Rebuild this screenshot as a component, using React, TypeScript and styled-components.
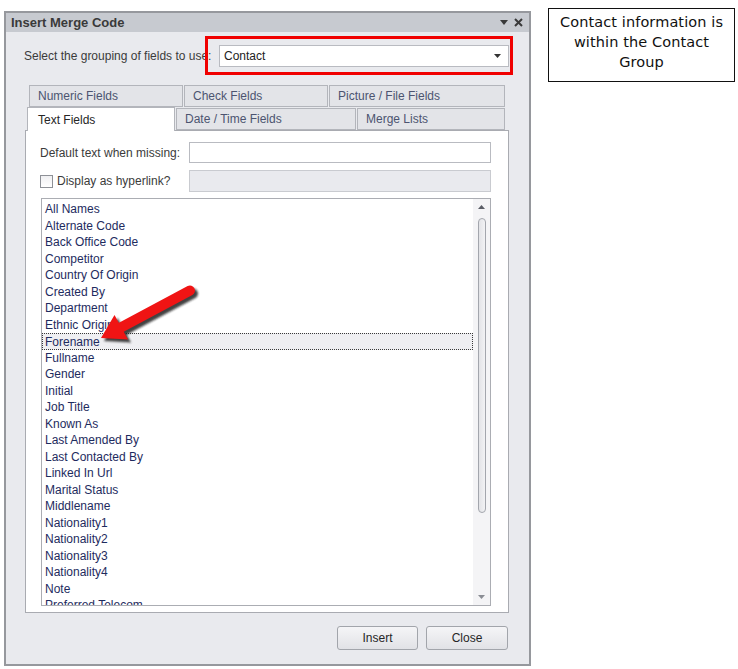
import React from "react";
import styled, { createGlobalStyle } from "styled-components";

const Global = createGlobalStyle`
  html, body { margin: 0; padding: 0; background: #ffffff; }
  body { font-family: "Liberation Sans", Arial, sans-serif; }
  * { box-sizing: border-box; }
`;

const Page = styled.div`
  position: relative;
  width: 738px;
  height: 669px;
  display: flex;
  align-items: flex-start;
  background: #fff;
`;

const Dialog = styled.div`
  margin: 11px 0 0 4px;
  width: 527px;
  height: 655px;
  border: 2px solid #96989d;
  background: #e9eaee;
  display: flex;
  flex-direction: column;
`;

const TitleBar = styled.div`
  height: 19px;
  background: #c7cad0;
  display: flex;
  align-items: center;
  padding: 0 6px 0 5px;
  font-weight: bold;
  font-size: 13px;
  color: #3a3a3a;
`;

const TitleText = styled.span`
  flex: 1;
`;

const TitleIcons = styled.div`
  display: flex;
  align-items: center;
  gap: 6px;
`;

const Body = styled.div`
  flex: 1;
  display: flex;
  flex-direction: column;
  padding: 13px 20px 14px 19px;
`;

const SelectRow = styled.div`
  display: flex;
  align-items: center;
  font-size: 12px;
  color: #3b3b3b;
`;

const SelectLabel = styled.span`
  width: 195px;
  margin-left: -1px;
`;

const ComboWrap = styled.div`
  position: relative;
  flex: 1;
`;

const Combo = styled.div`
  height: 22px;
  background: #fff;
  border: 1px solid #b9bbc1;
  display: flex;
  align-items: center;
  padding: 0 7px 0 4px;
  font-size: 12px;
  color: #222;
`;

const ComboText = styled.span`
  flex: 1;
`;

const Highlight = styled.div`
  position: absolute;
  left: -14px;
  right: -4px;
  top: -9px;
  bottom: -8px;
  border: 3px solid #f00000;
  pointer-events: none;
`;

const Tabs = styled.div`
  margin-top: 16px;
  display: flex;
  flex-direction: column;
`;

const TabRow = styled.div<{ $indent: number }>`
  display: flex;
  align-items: flex-end;
  padding-left: ${(p) => p.$indent}px;
  height: ${(p) => (p.$indent === 4 ? 24 : 23)}px;
  position: relative;
  z-index: 2;
`;

const Tab = styled.div<{ $w: number; $active?: boolean }>`
  width: ${(p) => p.$w}px;
  height: ${(p) => (p.$active ? 24 : 22)}px;
  margin-right: 1px;
  margin-bottom: ${(p) => (p.$active ? -1 : 0)}px;
  background: ${(p) => (p.$active ? "#ffffff" : "#e3e4e8")};
  border: 1px solid #b3b5bb;
  border-bottom: ${(p) => (p.$active ? "none" : "1px solid #b3b5bb")};
  display: flex;
  align-items: center;
  padding-left: ${(p) => (p.$active ? 10 : 8)}px;
  font-size: 12px;
  color: ${(p) => (p.$active ? "#262626" : "#4c5470")};
`;

const Panel = styled.div`
  height: 483px;
  background: #fff;
  border: 1px solid #a9abb1;
  padding: 11px 17px 6px 14px;
  display: flex;
  flex-direction: column;
`;

const FieldRow = styled.div<{ $h: number; $mt: number }>`
  display: flex;
  align-items: center;
  height: ${(p) => p.$h}px;
  margin-top: ${(p) => p.$mt}px;
  font-size: 12px;
  color: #3b3b3b;
`;

const FieldLabel = styled.label`
  width: 149px;
  display: flex;
  align-items: center;
  gap: 4px;
`;

const Input = styled.div<{ $disabled?: boolean }>`
  flex: 1;
  height: 100%;
  background: ${(p) => (p.$disabled ? "#e9eaee" : "#ffffff")};
  border: 1px solid ${(p) => (p.$disabled ? "#c9cbd0" : "#b9bbc1")};
`;

const Check = styled.span`
  width: 13px;
  height: 13px;
  border: 1px solid #8e9197;
  background: linear-gradient(#f0f0f2, #ffffff);
  display: inline-block;
`;

const ListBox = styled.div`
  margin-top: 6px;
  margin-left: 1px;
  height: 408px;
  border: 1px solid #abadb3;
  background: #fff;
  display: flex;
  overflow: hidden;
`;

const Items = styled.div`
  flex: 1;
  padding-top: 2px;
  overflow: hidden;
`;

const Item = styled.div<{ $sel?: boolean }>`
  height: 16.5px;
  line-height: 16px;
  padding-left: ${(p) => (p.$sel ? 2 : 3)}px;
  font-size: 12px;
  color: #1e2b5e;
  white-space: nowrap;
  background: ${(p) => (p.$sel ? "#efeff2" : "transparent")};
  border: ${(p) => (p.$sel ? "1px dotted #3a3a3a" : "none")};
`;

const ScrollBar = styled.div`
  width: 17px;
  background: #f4f4f6;
  display: flex;
  flex-direction: column;
  align-items: center;
`;

const ArrowBox = styled.div`
  height: 16px;
  display: flex;
  align-items: center;
  justify-content: center;
`;

const Thumb = styled.div`
  margin-top: 3px;
  width: 8px;
  height: 295px;
  border: 1px solid #a3a6ad;
  border-radius: 4px;
  background: linear-gradient(90deg, #e2e3e7, #f2f2f4);
`;

const Spacer = styled.div`
  flex: 1;
`;

const Footer = styled.div`
  margin-top: 13px;
  display: flex;
  justify-content: flex-end;
  gap: 8px;
  padding-right: 1px;
`;

const Button = styled.button<{ $w: number }>`
  width: ${(p) => p.$w}px;
  height: 24px;
  border: 1px solid #a2a5ab;
  border-radius: 3px;
  background: linear-gradient(#f5f5f7, #e1e2e6);
  font-family: "Liberation Sans", Arial, sans-serif;
  font-size: 12px;
  color: #262626;
  padding: 0;
`;

const Callout = styled.div`
  margin: 8px 0 0 17px;
  width: 187px;
  height: 74px;
  border: 1px solid #111;
  padding-top: 3px;
  text-align: center;
  font-family: "DejaVu Sans", sans-serif;
  font-size: 14.5px;
  letter-spacing: 0.1px;
  line-height: 20px;
  color: #111;
`;

const ArrowOverlay = styled.svg`
  position: absolute;
  left: 90px;
  top: 278px;
  pointer-events: none;
`;

const items = [
  "All Names",
  "Alternate Code",
  "Back Office Code",
  "Competitor",
  "Country Of Origin",
  "Created By",
  "Department",
  "Ethnic Origin",
  "Forename",
  "Fullname",
  "Gender",
  "Initial",
  "Job Title",
  "Known As",
  "Last Amended By",
  "Last Contacted By",
  "Linked In Url",
  "Marital Status",
  "Middlename",
  "Nationality1",
  "Nationality2",
  "Nationality3",
  "Nationality4",
  "Note",
  "Preferred Telecom",
];

const Tri = ({ up, color = "#555" }: { up?: boolean; color?: string }) => (
  <svg width="7" height="4" viewBox="0 0 7 4">
    <path d={up ? "M0 4 L3.5 0 L7 4 Z" : "M0 0 L7 0 L3.5 4 Z"} fill={color} />
  </svg>
);

export default function App() {
  return (
    <Page>
      <Global />
      <Dialog>
        <TitleBar>
          <TitleText>Insert Merge Code</TitleText>
          <TitleIcons>
            <svg width="8" height="5" viewBox="0 0 8 5">
              <path d="M0 0 L8 0 L4 5 Z" fill="#3a3a3a" />
            </svg>
            <svg width="9" height="9" viewBox="0 0 9 9">
              <path d="M1 1 L8 8 M8 1 L1 8" stroke="#3a3a3a" strokeWidth="2" />
            </svg>
          </TitleIcons>
        </TitleBar>
        <Body>
          <SelectRow>
            <SelectLabel>Select the grouping of fields to use:</SelectLabel>
            <ComboWrap>
              <Combo>
                <ComboText>Contact</ComboText>
                <Tri color="#333" />
              </Combo>
              <Highlight />
            </ComboWrap>
          </SelectRow>
          <Tabs>
            <TabRow $indent={4}>
              <Tab $w={154}>Numeric Fields</Tab>
              <Tab $w={144}>Check Fields</Tab>
              <Tab $w={176}>Picture / File Fields</Tab>
            </TabRow>
            <TabRow $indent={2}>
              <Tab $w={148} $active>Text Fields</Tab>
              <Tab $w={180}>Date / Time Fields</Tab>
              <Tab $w={148}>Merge Lists</Tab>
            </TabRow>
            <Panel>
              <FieldRow $h={21} $mt={0}>
                <FieldLabel>Default text when missing:</FieldLabel>
                <Input />
              </FieldRow>
              <FieldRow $h={22} $mt={7}>
                <FieldLabel>
                  <Check />
                  Display as hyperlink?
                </FieldLabel>
                <Input $disabled />
              </FieldRow>
              <ListBox>
                <Items>
                  {items.map((it) => (
                    <Item key={it} $sel={it === "Forename"}>
                      {it}
                    </Item>
                  ))}
                </Items>
                <ScrollBar>
                  <ArrowBox>
                    <Tri up color="#5a5d66" />
                  </ArrowBox>
                  <Thumb />
                  <Spacer />
                  <ArrowBox>
                    <Tri color="#8a8d94" />
                  </ArrowBox>
                </ScrollBar>
              </ListBox>
            </Panel>
          </Tabs>
          <Footer>
            <Button $w={81}>Insert</Button>
            <Button $w={82}>Close</Button>
          </Footer>
        </Body>
      </Dialog>
      <Callout>
        Contact information is
        <br />
        within the Contact
        <br />
        Group
      </Callout>
      <ArrowOverlay width="120" height="80" viewBox="0 0 120 80">
        <defs>
          <filter id="sh" x="-20%" y="-20%" width="140%" height="140%">
            <feGaussianBlur stdDeviation="1.3" />
          </filter>
        </defs>
        <g transform="translate(3 3)" filter="url(#sh)" opacity="0.85">
          <path d="M29 50.5 L100 12.5" stroke="#222" strokeWidth="10" strokeLinecap="round" />
          <path d="M11 60 L38 61.5 L24.5 37 Z" fill="#222" />
        </g>
        <path d="M29 50.5 L100 12.5" stroke="#f01414" strokeWidth="10" strokeLinecap="round" />
        <path d="M11 60 L38 61.5 L24.5 37 Z" fill="#f01414" />
      </ArrowOverlay>
    </Page>
  );
}
